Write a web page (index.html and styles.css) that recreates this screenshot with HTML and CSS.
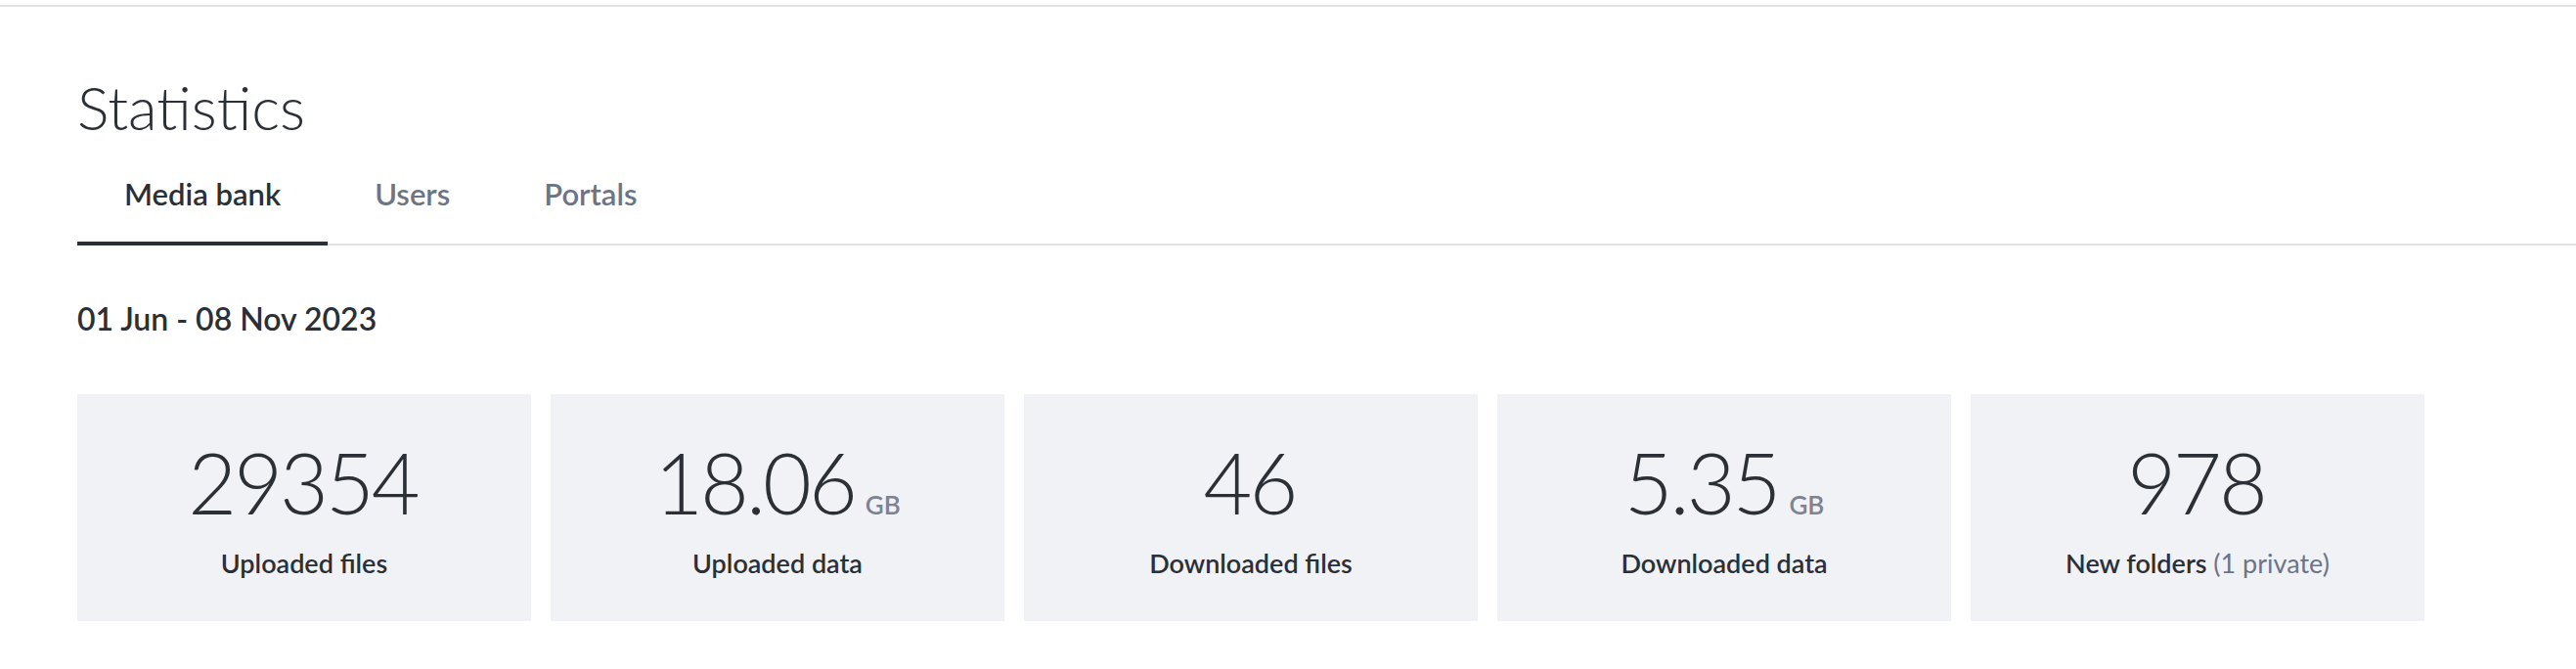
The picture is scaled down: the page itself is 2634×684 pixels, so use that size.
FILE: index.html
```html
<!DOCTYPE html>
<html lang="en">
<head>
<meta charset="utf-8">
<title>Statistics</title>
<link rel="stylesheet" href="styles.css">
</head>
<body>
<div class="topbar"></div>
<main class="page">
  <h1 class="title">Statistics</h1>
  <nav class="tabs">
    <a class="tab active">Media bank</a>
    <a class="tab">Users</a>
    <a class="tab">Portals</a>
  </nav>
  <h2 class="range">01 Jun - 08 Nov 2023</h2>
  <section class="cards">
    <div class="card">
      <div class="value"><span class="num">29354</span></div>
      <div class="label">Uploaded files</div>
    </div>
    <div class="card">
      <div class="value"><span class="num">18.06</span><span class="unit">GB</span></div>
      <div class="label">Uploaded data</div>
    </div>
    <div class="card">
      <div class="value"><span class="num">46</span></div>
      <div class="label">Downloaded files</div>
    </div>
    <div class="card">
      <div class="value"><span class="num">5.35</span><span class="unit">GB</span></div>
      <div class="label">Downloaded data</div>
    </div>
    <div class="card">
      <div class="value"><span class="num">978</span></div>
      <div class="label">New folders <span class="muted">(1 private)</span></div>
    </div>
  </section>
</main>
</body>
</html>
```

FILE: styles.css
```css
html, body {
  margin: 0;
  padding: 0;
  background: #ffffff;
}

body {
  font-family: "Lato", "Open Sans", sans-serif;
  color: #2b2f36;
}

.topbar {
  height: 5px;
  border-bottom: 2px solid #e1e2e6;
}

.page {
  padding: 72px 0 0 79px;
}

.title {
  margin: 0;
  font-size: 61px;
  line-height: 61px;
  font-weight: 300;
  color: #2b2f36;
}

.tabs {
  display: flex;
  margin-top: 38px;
  border-bottom: 2px solid #e1e2e6;
}

.tab {
  display: block;
  padding: 0 48px 29px;
  margin-bottom: -2px;
  border-bottom: 4px solid transparent;
  font-size: 31px;
  line-height: 40px;
  font-weight: 600;
  color: #6c7586;
  cursor: pointer;
}

.tab.active {
  color: #2b2f36;
  border-bottom-color: #2b2f36;
}

.range {
  margin: 55px 0 0;
  font-size: 32px;
  line-height: 40px;
  font-weight: 600;
  color: #2b2f36;
}

.cards {
  display: flex;
  gap: 20px;
  margin-top: 57px;
}

.card {
  width: 464px;
  height: 232px;
  box-sizing: border-box;
  padding-top: 43px;
  background: #f1f2f6;
  text-align: center;
}

.value {
  display: flex;
  justify-content: center;
  align-items: baseline;
  height: 94px;
  line-height: 94px;
}

.num {
  font-size: 86px;
  font-weight: 300;
  letter-spacing: -3px;
  margin-right: 3px;
  color: #2b2f36;
}

.unit {
  margin-left: 8px;
  font-size: 26px;
  font-weight: 600;
  color: #7b8394;
}

.label {
  margin-top: 21px;
  font-size: 27px;
  line-height: 30px;
  font-weight: 600;
  color: #2b2f36;
}

.muted {
  font-weight: 400;
  color: #6c7586;
}
```
